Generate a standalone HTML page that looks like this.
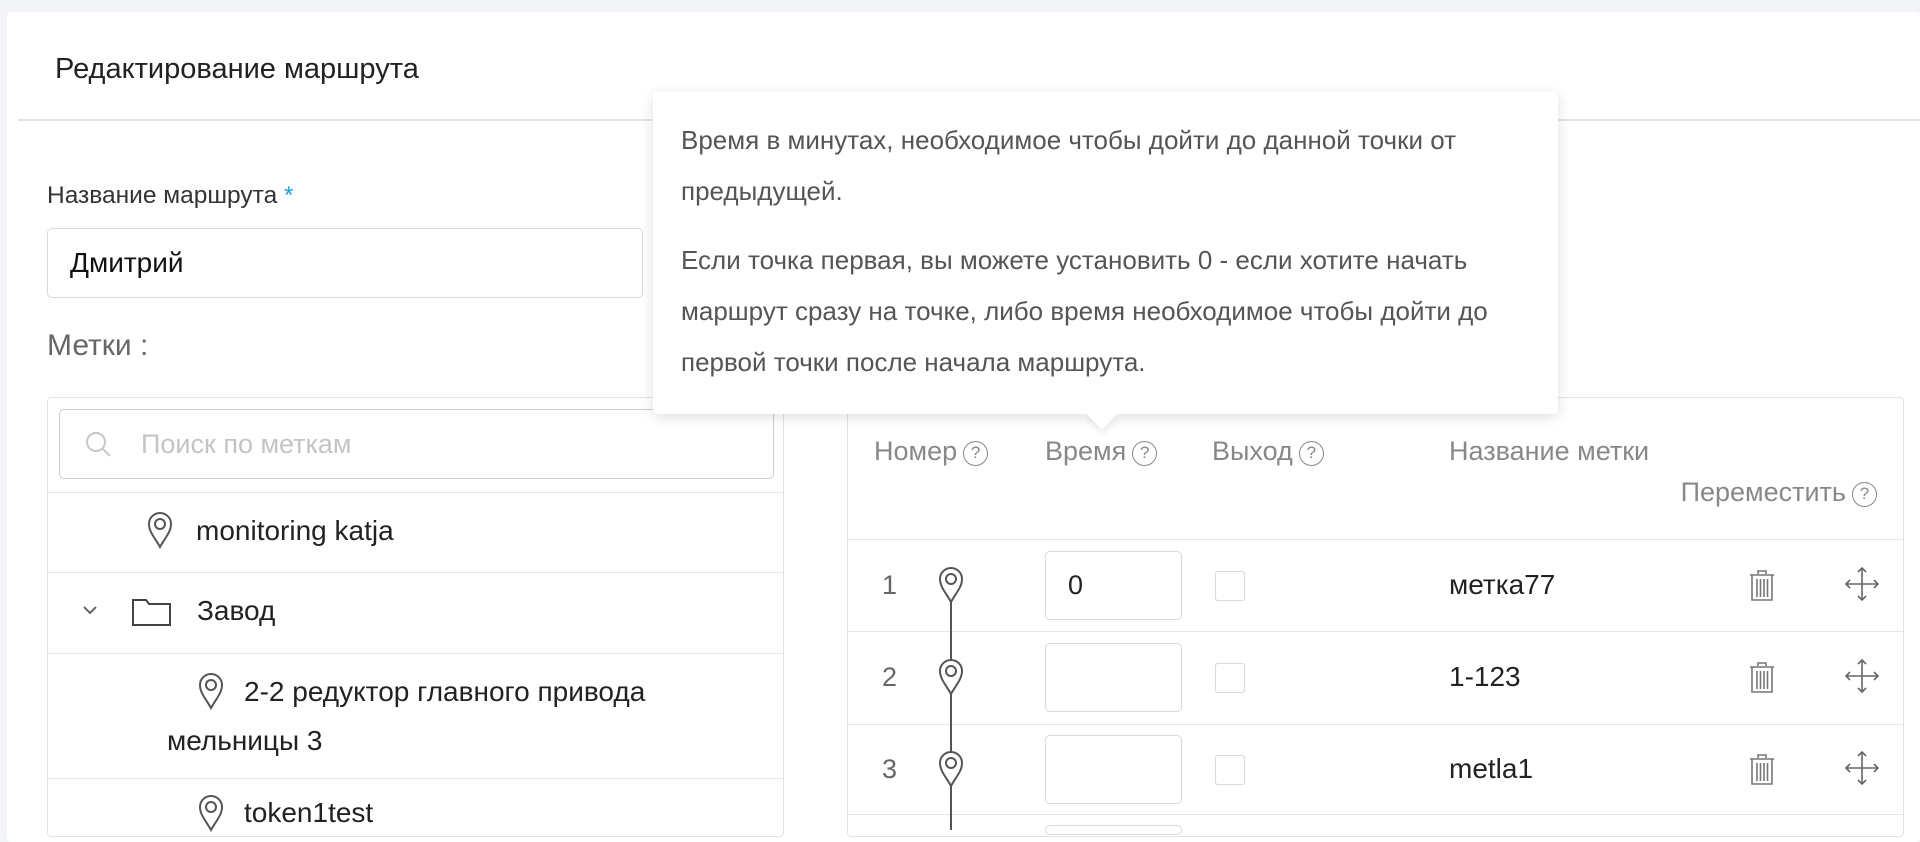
<!DOCTYPE html>
<html><head><meta charset="utf-8"><style>
*{box-sizing:border-box;margin:0;padding:0}
body{width:1920px;height:826px;overflow:hidden;background:#f3f4f7;font-family:"Liberation Sans",sans-serif;color:#222;position:relative}
.abs{position:absolute}
.card{left:7px;top:12px;width:1913px;height:830px;background:#fff;border-radius:4px}
.t{white-space:nowrap;line-height:1}
.q{display:inline-block;width:25px;height:25px;border:1.5px solid #888;border-radius:50%;font-size:17px;text-align:center;line-height:22px;vertical-align:2px;margin-left:6px;color:#888}
.sep{height:1px;background:#e6e6e6}
.inp{border:1px solid #d9d9d9;border-radius:5px;background:#fff}
.cb{width:30px;height:30px;border:1px solid #d9d9d9;border-radius:3px}
</style></head><body>
<div class="abs card"></div>
<div class="abs t" style="left:55px;top:55px;font-size:29px;color:#222">Редактирование маршрута</div>
<div class="abs" style="left:18px;top:119px;width:1902px;height:2px;background:#e3e4e8"></div>

<div class="abs t" style="left:47px;top:184px;font-size:24.5px;color:#333">Название маршрута <span style="color:#1a9fd9">*</span></div>
<div class="abs inp" style="left:47px;top:228px;width:596px;height:70px"></div>
<div class="abs t" style="left:70px;top:249px;font-size:28px;color:#111">Дмитрий</div>
<div class="abs t" style="left:47px;top:331px;font-size:30px;color:#666">Метки :</div>

<!-- left panel -->
<div class="abs" style="left:47px;top:397px;width:737px;height:440px;border:1px solid #e3e3e3;border-radius:4px"></div>
<div class="abs inp" style="left:59px;top:409px;width:715px;height:70px;border-color:#ccc"></div>
<svg class="abs" style="left:84px;top:430px" width="28" height="28" viewBox="0 0 28 28"><circle cx="12" cy="12" r="9" fill="none" stroke="#c8c8c8" stroke-width="2"/><line x1="19" y1="19" x2="26" y2="26" stroke="#c8c8c8" stroke-width="2"/></svg>
<div class="abs t" style="left:141px;top:431px;font-size:27px;color:#c4c4c4">Поиск по меткам</div>
<div class="abs sep" style="left:48px;top:492px;width:735px"></div>
<div class="abs sep" style="left:48px;top:572px;width:735px"></div>
<div class="abs sep" style="left:48px;top:653px;width:735px"></div>
<div class="abs sep" style="left:48px;top:778px;width:735px"></div>

<svg class="abs" style="left:147px;top:511px" width="26" height="38" viewBox="0 0 26 38"><path d="M13 36 C8 27 2 21 2 13 A11 11 0 0 1 24 13 C24 21 18 27 13 36Z" fill="none" stroke="#555" stroke-width="2"/><circle cx="13" cy="13" r="5" fill="none" stroke="#555" stroke-width="2"/></svg>
<div class="abs t" style="left:196px;top:517px;font-size:28px">monitoring katja</div>

<svg class="abs" style="left:82px;top:604px" width="16" height="12" viewBox="0 0 16 12"><path d="M2 3 L8 9 L14 3" fill="none" stroke="#666" stroke-width="2"/></svg>
<svg class="abs" style="left:131px;top:596px" width="41" height="31" viewBox="0 0 41 31"><path d="M2 4 H15 L18 8 H39 V29 H2 Z" fill="none" stroke="#444" stroke-width="2"/></svg>
<div class="abs t" style="left:197px;top:597px;font-size:28px">Завод</div>

<svg class="abs" style="left:198px;top:672px" width="26" height="38" viewBox="0 0 26 38"><path d="M13 36 C8 27 2 21 2 13 A11 11 0 0 1 24 13 C24 21 18 27 13 36Z" fill="none" stroke="#555" stroke-width="2"/><circle cx="13" cy="13" r="5" fill="none" stroke="#555" stroke-width="2"/></svg>
<div class="abs t" style="left:244px;top:678px;font-size:28px">2-2 редуктор главного привода</div>
<div class="abs t" style="left:167px;top:727px;font-size:28px">мельницы 3</div>
<svg class="abs" style="left:198px;top:794px" width="26" height="38" viewBox="0 0 26 38"><path d="M13 36 C8 27 2 21 2 13 A11 11 0 0 1 24 13 C24 21 18 27 13 36Z" fill="none" stroke="#555" stroke-width="2"/><circle cx="13" cy="13" r="5" fill="none" stroke="#555" stroke-width="2"/></svg>
<div class="abs t" style="left:244px;top:799px;font-size:28px">token1test</div>

<!-- right table -->
<div class="abs" style="left:847px;top:397px;width:1057px;height:440px;border:1px solid #e3e3e3;border-radius:4px"></div>
<div class="abs t" style="left:874px;top:438px;font-size:27px;color:#888">Номер<span class="q">?</span></div>
<div class="abs t" style="left:1045px;top:438px;font-size:27px;color:#888">Время<span class="q">?</span></div>
<div class="abs t" style="left:1212px;top:438px;font-size:27px;color:#888">Выход<span class="q">?</span></div>
<div class="abs t" style="left:1449px;top:438px;font-size:27px;color:#888">Название метки</div>
<div class="abs t" style="right:43px;top:479px;font-size:27px;color:#888">Переместить<span class="q">?</span></div>
<div class="abs sep" style="left:848px;top:539px;width:1055px"></div>
<div class="abs sep" style="left:848px;top:631px;width:1055px"></div>
<div class="abs sep" style="left:848px;top:724px;width:1055px"></div>
<div class="abs sep" style="left:848px;top:814px;width:1055px"></div>
<div class="abs" style="left:950px;top:600px;width:2px;height:230px;background:#555"></div>

<!-- row1 -->
<div class="abs t" style="left:882px;top:572px;font-size:27px;color:#666">1</div>
<svg class="abs" style="left:938px;top:566px" width="26" height="38" viewBox="0 0 26 38"><path d="M13 36 C8 27 2 21 2 13 A11 11 0 0 1 24 13 C24 21 18 27 13 36Z" fill="#fff" stroke="#555" stroke-width="2"/><circle cx="13" cy="13" r="5" fill="none" stroke="#555" stroke-width="2"/></svg>
<div class="abs inp" style="left:1045px;top:551px;width:137px;height:69px"></div>
<div class="abs t" style="left:1068px;top:572px;font-size:27px">0</div>
<div class="abs cb" style="left:1215px;top:571px"></div>
<div class="abs t" style="left:1449px;top:571px;font-size:28px">метка77</div>
<!-- row2 -->
<div class="abs t" style="left:882px;top:664px;font-size:27px;color:#666">2</div>
<svg class="abs" style="left:938px;top:658px" width="26" height="38" viewBox="0 0 26 38"><path d="M13 36 C8 27 2 21 2 13 A11 11 0 0 1 24 13 C24 21 18 27 13 36Z" fill="#fff" stroke="#555" stroke-width="2"/><circle cx="13" cy="13" r="5" fill="none" stroke="#555" stroke-width="2"/></svg>
<div class="abs inp" style="left:1045px;top:643px;width:137px;height:69px"></div>
<div class="abs cb" style="left:1215px;top:663px"></div>
<div class="abs t" style="left:1449px;top:663px;font-size:28px">1-123</div>
<!-- row3 -->
<div class="abs t" style="left:882px;top:756px;font-size:27px;color:#666">3</div>
<svg class="abs" style="left:938px;top:750px" width="26" height="38" viewBox="0 0 26 38"><path d="M13 36 C8 27 2 21 2 13 A11 11 0 0 1 24 13 C24 21 18 27 13 36Z" fill="#fff" stroke="#555" stroke-width="2"/><circle cx="13" cy="13" r="5" fill="none" stroke="#555" stroke-width="2"/></svg>
<div class="abs inp" style="left:1045px;top:735px;width:137px;height:69px"></div>
<div class="abs cb" style="left:1215px;top:755px"></div>
<div class="abs t" style="left:1449px;top:755px;font-size:28px">metla1</div>
<div class="abs inp" style="left:1045px;top:825px;width:137px;height:10px"></div>

<!-- trash & move icons -->
<svg class="abs" style="left:1749px;top:570px" width="26" height="32" viewBox="0 0 26 32"><path d="M9 4 V1 H17 V4 M1 5 H25 M3 5 V30 H23 V5 M8 9 V27 M11.5 9 V27 M15 9 V27 M18.5 9 V27" fill="none" stroke="#777" stroke-width="1.6"/></svg>
<svg class="abs" style="left:1749px;top:662px" width="26" height="32" viewBox="0 0 26 32"><path d="M9 4 V1 H17 V4 M1 5 H25 M3 5 V30 H23 V5 M8 9 V27 M11.5 9 V27 M15 9 V27 M18.5 9 V27" fill="none" stroke="#777" stroke-width="1.6"/></svg>
<svg class="abs" style="left:1749px;top:754px" width="26" height="32" viewBox="0 0 26 32"><path d="M9 4 V1 H17 V4 M1 5 H25 M3 5 V30 H23 V5 M8 9 V27 M11.5 9 V27 M15 9 V27 M18.5 9 V27" fill="none" stroke="#777" stroke-width="1.6"/></svg>
<svg class="abs" style="left:1845px;top:567px" width="34" height="34" viewBox="0 0 34 34"><path d="M17 1 V33 M1 17 H33 M13 5 L17 1 L21 5 M13 29 L17 33 L21 29 M5 13 L1 17 L5 21 M29 13 L33 17 L29 21" fill="none" stroke="#666" stroke-width="1.6"/></svg>
<svg class="abs" style="left:1845px;top:659px" width="34" height="34" viewBox="0 0 34 34"><path d="M17 1 V33 M1 17 H33 M13 5 L17 1 L21 5 M13 29 L17 33 L21 29 M5 13 L1 17 L5 21 M29 13 L33 17 L29 21" fill="none" stroke="#666" stroke-width="1.6"/></svg>
<svg class="abs" style="left:1845px;top:751px" width="34" height="34" viewBox="0 0 34 34"><path d="M17 1 V33 M1 17 H33 M13 5 L17 1 L21 5 M13 29 L17 33 L21 29 M5 13 L1 17 L5 21 M29 13 L33 17 L29 21" fill="none" stroke="#666" stroke-width="1.6"/></svg>

<!-- tooltip -->
<div class="abs" style="left:653px;top:92px;width:905px;height:322px;background:#fff;border-radius:5px;box-shadow:0 3px 14px rgba(0,0,0,0.13)"></div>
<div class="abs" style="left:1091px;top:403px;width:22px;height:22px;background:#fff;transform:rotate(45deg);box-shadow:4px 4px 6px rgba(0,0,0,0.06)"></div>
<div class="abs" style="left:660px;top:395px;width:890px;height:19px;background:#fff"></div>
<div class="abs" style="left:681px;top:115px;font-size:26px;color:#555;line-height:51px;white-space:nowrap">
Время в минутах, необходимое чтобы дойти до данной точки от<br>предыдущей.<div style="height:18px"></div>Если точка первая, вы можете установить 0 - если хотите начать<br>маршрут сразу на точке, либо время необходимое чтобы дойти до<br>первой точки после начала маршрута.
</div>
</body></html>
